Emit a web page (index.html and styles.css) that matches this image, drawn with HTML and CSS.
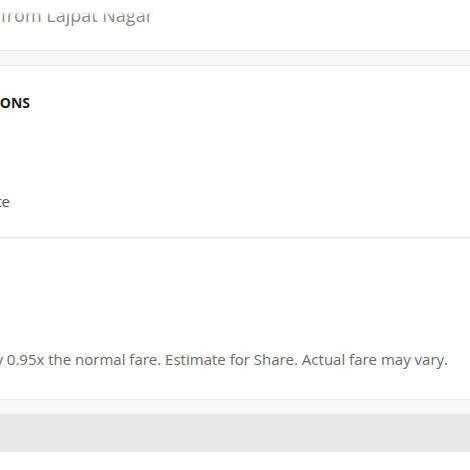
FILE: index.html
```html
<!DOCTYPE html>
<html lang="en">
<head>
<meta charset="utf-8">
<title>Ride details</title>
<link rel="stylesheet" href="styles.css">
</head>
<body>
<main class="page">
  <header class="pickup">
    <div class="clip clip-pickup"><span class="pickup-text">Share ride from Lajpat Nagar</span></div>
  </header>
  <div class="band"></div>
  <section class="options">
    <div class="clip clip-title"><h2 class="title">PAYMENT OPTIONS</h2></div>
    <div class="clip clip-item"><span class="item">Corporate</span></div>
  </section>
  <section class="fare">
    <div class="clip clip-note"><p class="note">Fare for Share is usually 0.95x the normal fare. Estimate for Share. Actual fare may vary.</p></div>
  </section>
  <div class="footer-shade"></div>
  <div class="footer-bar"></div>
</main>
</body>
</html>
```

FILE: styles.css
```css
html, body {
  margin: 0;
  padding: 0;
  background: #ffffff;
  overflow: hidden;
}

body {
  font-family: "Open Sans", "Noto Sans", "Liberation Sans", sans-serif;
  color: #333;
}

.page {
  display: flex;
  flex-direction: column;
  width: 470px;
}

.clip {
  display: flex;
  justify-content: flex-end;
  white-space: nowrap;
}

.pickup {
  position: relative;
  height: 50px;
  padding-top: 3px;
  box-sizing: border-box;
}

.pickup::before {
  content: "";
  position: absolute;
  left: 0;
  right: 0;
  top: 0;
  height: 16px;
  background: linear-gradient(to bottom, #fff 0, #fff 12px, rgba(255,255,255,0.45) 14px, rgba(255,255,255,0) 16px);
  z-index: 1;
}

.clip-pickup { width: 153px; }

.pickup-text {
  font-size: 18px;
  line-height: 24px;
  color: #8a8a8a;
}

.band {
  height: 16px;
  box-sizing: border-box;
  background: #f6f6f6;
  border-top: 1px solid #ececec;
  border-bottom: 1px solid #efefef;
}

.options {
  display: flex;
  flex-direction: column;
  padding-top: 27px;
  height: 172px;
  box-sizing: border-box;
  border-bottom: 1px solid #e2e2e2;
}

.clip-title { width: 30px; }

.title {
  margin: 0;
  font-size: 14px;
  line-height: 20px;
  font-weight: 700;
  color: #1e1e1e;
}

.clip-item {
  width: 10px;
  margin-top: 78px;
}

.item {
  font-size: 15px;
  line-height: 20px;
  color: #555;
}

.fare {
  padding-top: 111px;
  height: 161px;
  box-sizing: border-box;
}

.clip-note { width: 448px; }

.note {
  margin: 0;
  font-size: 15px;
  line-height: 20px;
  color: #6a6a6a;
}

.footer-shade {
  height: 15px;
  background: #f7f7f7;
  border-top: 1px solid #eeeeee;
  box-sizing: border-box;
}

.footer-bar {
  height: 38px;
  background: #e8e8e8;
}
```
